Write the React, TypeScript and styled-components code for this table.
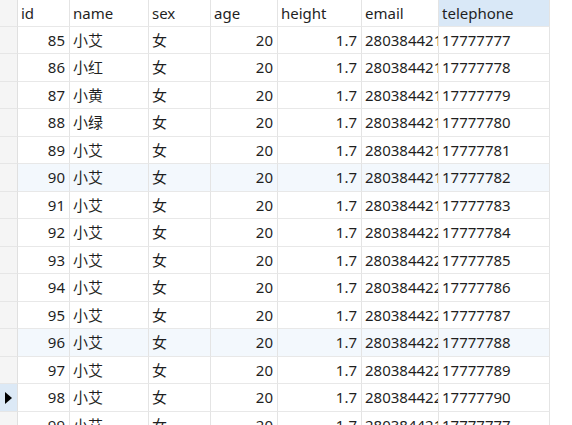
import React from "react";
import styled, { createGlobalStyle } from "styled-components";

const Global = createGlobalStyle`
  html, body { margin: 0; padding: 0; background: #ffffff; }
  body { font-family: "Noto Sans", "Noto Sans CJK SC", sans-serif; overflow: hidden; }
`;

const COLS = "18px 52px 79px 62px 67px 84px 77px 111px";

const Grid = styled.div`
  width: 572px;
  height: 425px;
  overflow: hidden;
  background: #ffffff;
`;

const Row = styled.div<{ $h: number }>`
  display: grid;
  grid-template-columns: ${COLS};
  height: ${(p) => p.$h}px;
`;

const Cell = styled.div<{ $right?: boolean; $bg?: string }>`
  box-sizing: border-box;
  border-right: 1px solid #e4e4e4;
  border-bottom: 1px solid #e8e8e8;
  background: ${(p) => p.$bg || "transparent"};
  color: #1f1f1f;
  font-size: 15px;
  line-height: 1;
  padding: 0 4px 0 3px;
  display: flex;
  align-items: center;
  justify-content: ${(p) => (p.$right ? "flex-end" : "flex-start")};
  white-space: nowrap;
  overflow: hidden;
`;

const Gutter = styled.div<{ $bg?: string }>`
  box-sizing: border-box;
  border-right: 1px solid #e0e0e0;
  border-bottom: 1px solid #e6e6e6;
  background: ${(p) => p.$bg || "#f5f5f5"};
  display: flex;
  align-items: center;
  justify-content: flex-start;
  padding-left: 5px;
`;

const Arrow = styled.div`
  width: 0;
  height: 0;
  border-top: 6px solid transparent;
  border-bottom: 6px solid transparent;
  border-left: 7px solid #000;
`;

const Text = styled.span`
  display: block;
  white-space: nowrap;
`;

const headers = ["id", "name", "sex", "age", "height", "email", "telephone"];

type R = { id: number; name: string; email: string; tel: string };

const rows: R[] = [
  { id: 85, name: "小艾", email: "2803844217@qq.com", tel: "17777777" },
  { id: 86, name: "小红", email: "2803844217@qq.com", tel: "17777778" },
  { id: 87, name: "小黄", email: "2803844217@qq.com", tel: "17777779" },
  { id: 88, name: "小绿", email: "2803844217@qq.com", tel: "17777780" },
  { id: 89, name: "小艾", email: "2803844217@qq.com", tel: "17777781" },
  { id: 90, name: "小艾", email: "2803844217@qq.com", tel: "17777782" },
  { id: 91, name: "小艾", email: "2803844217@qq.com", tel: "17777783" },
  { id: 92, name: "小艾", email: "2803844227@qq.com", tel: "17777784" },
  { id: 93, name: "小艾", email: "2803844227@qq.com", tel: "17777785" },
  { id: 94, name: "小艾", email: "2803844227@qq.com", tel: "17777786" },
  { id: 95, name: "小艾", email: "2803844227@qq.com", tel: "17777787" },
  { id: 96, name: "小艾", email: "2803844227@qq.com", tel: "17777788" },
  { id: 97, name: "小艾", email: "2803844227@qq.com", tel: "17777789" },
  { id: 98, name: "小艾", email: "2803844227@qq.com", tel: "17777790" },
  { id: 99, name: "小艾", email: "2803844217@qq.com", tel: "17777777" },
];

const highlight = new Set([90, 96]);

export default function App() {
  return (
    <>
      <Global />
      <Grid>
        <Row $h={27}>
          <Gutter />
          {headers.map((h) => (
            <Cell key={h} $bg={h === "telephone" ? "#d9e8f7" : "#ffffff"}>
              <Text>{h}</Text>
            </Cell>
          ))}
        </Row>
        {rows.map((r, i) => {
          const bg = highlight.has(r.id) ? "#f3f8fd" : undefined;
          const current = r.id === 98;
          return (
            <Row key={r.id} $h={i % 2 === 0 ? 27 : 28}>
              <Gutter $bg={current ? "#dce9f6" : undefined}>{current && <Arrow />}</Gutter>
              <Cell $right $bg={bg}><Text>{r.id}</Text></Cell>
              <Cell $bg={bg}><Text>{r.name}</Text></Cell>
              <Cell $bg={bg}><Text>女</Text></Cell>
              <Cell $right $bg={bg}><Text>20</Text></Cell>
              <Cell $right $bg={bg}><Text>1.7</Text></Cell>
              <Cell $bg={bg}><Text>{r.email}</Text></Cell>
              <Cell $bg={bg}><Text>{r.tel}</Text></Cell>
            </Row>
          );
        })}
      </Grid>
    </>
  );
}
